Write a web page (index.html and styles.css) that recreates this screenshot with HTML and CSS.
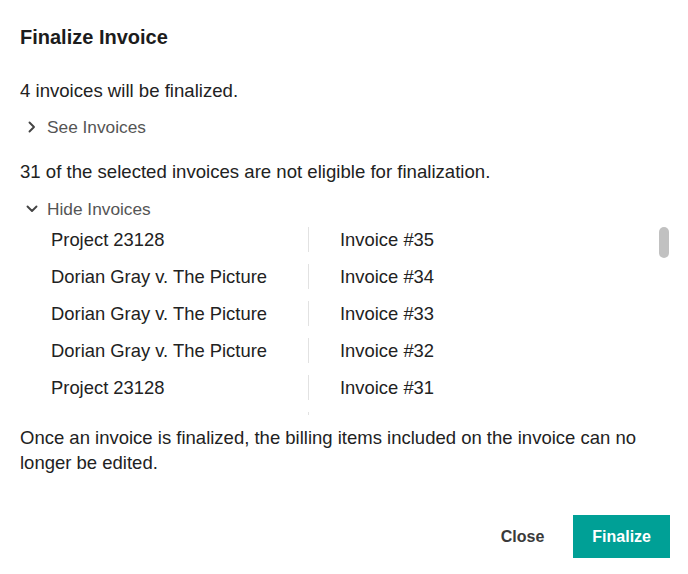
FILE: index.html
```html
<!DOCTYPE html>
<html lang="en">
<head>
    <meta charset="UTF-8">
    <meta name="viewport" content="width=device-width, initial-scale=1.0">
    <title>Finalize Invoice</title>
    <link rel="stylesheet" href="styles.css">
</head>
<body>
<div class="dialog">
    <h2 class="dialog-title">Finalize Invoice</h2>

    <p class="summary">4 invoices will be finalized.</p>
    <button class="toggle">
        <svg class="chevron" viewBox="0 0 12 12" width="12" height="12"><path d="M3.5 1.5l4.5 4.5-4.5 4.5" /></svg>
        See Invoices
    </button>

    <p class="summary summary-second">31 of the selected invoices are not eligible for finalization.</p>
    <button class="toggle toggle-open">
        <svg class="chevron" viewBox="0 0 12 12" width="12" height="12"><path d="M1.5 3.5l4.5 4.5 4.5-4.5" /></svg>
        Hide Invoices
    </button>

    <!-- Ineligible invoices (first page of 31) -->
    <div class="invoice-list">
        <div class="invoice-row"><span class="matter">Project 23128</span><span class="invoice">Invoice #35</span></div>
        <div class="invoice-row"><span class="matter">Dorian Gray v. The Picture</span><span class="invoice">Invoice #34</span></div>
        <div class="invoice-row"><span class="matter">Dorian Gray v. The Picture</span><span class="invoice">Invoice #33</span></div>
        <div class="invoice-row"><span class="matter">Dorian Gray v. The Picture</span><span class="invoice">Invoice #32</span></div>
        <div class="invoice-row"><span class="matter">Project 23128</span><span class="invoice">Invoice #31</span></div>
        <div class="invoice-row"><span class="invoice invoice-empty"></span></div>
        <div class="scroll-thumb"></div>
    </div>

    <p class="warning">Once an invoice is finalized, the billing items included on the invoice can no longer be edited.</p>

    <div class="actions">
        <button class="btn btn-close">Close</button>
        <button class="btn btn-primary">Finalize</button>
    </div>
</div>
</body>
</html>
```

FILE: styles.css
```css
* {
    margin: 0;
    padding: 0;
    box-sizing: border-box;
}

body {
    font-family: 'Liberation Sans', Arial, sans-serif;
    background-color: #fff;
    color: #222;
}

.dialog {
    width: 688px;
    height: 574px;
    padding: 23px 18px 0 20px;
}

.dialog-title {
    font-size: 20px;
    font-weight: bold;
    line-height: 28px;
    color: #1c1c1c;
}

.summary {
    font-size: 18.6px;
    line-height: 24px;
    margin-top: 28px;
}

.summary-second {
    margin-top: 21px;
}

/* Show / hide toggles */
.toggle {
    display: flex;
    align-items: center;
    gap: 9px;
    margin-top: 12px;
    padding-left: 6px;
    background: none;
    border: none;
    font-family: inherit;
    font-size: 17.3px;
    line-height: 24px;
    color: #555;
    cursor: pointer;
}

.toggle-open {
    margin-top: 13px;
}

.chevron {
    fill: none;
    stroke: #444;
    stroke-width: 1.9;
    stroke-linecap: round;
    stroke-linejoin: round;
}

/* Scrolling list */
.invoice-list {
    position: relative;
    margin-top: 6px;
    height: 188px;
    overflow: hidden;
    padding-left: 31px;
}

.scroll-thumb {
    position: absolute;
    top: 0;
    right: 1px;
    width: 10px;
    height: 31px;
    background-color: #c1c1c1;
    border-radius: 5px;
}

.invoice-row {
    display: grid;
    grid-template-columns: 257px 1fr;
    height: 25px;
    margin-bottom: 12px;
    font-size: 18.4px;
    line-height: 25px;
}

.invoice {
    border-left: 1px solid #e2e2e2;
    padding-left: 31px;
}

.invoice-empty {
    grid-column: 2;
    height: 25px;
}

.warning {
    margin-top: 10px;
    font-size: 18.5px;
    line-height: 25px;
}

/* Footer buttons */
.actions {
    display: flex;
    justify-content: flex-end;
    gap: 10px;
    margin-top: 40px;
}

.btn {
    height: 43px;
    padding: 0 19px;
    border: none;
    font-family: inherit;
    font-size: 16px;
    font-weight: bold;
    cursor: pointer;
}

.btn-close {
    background: none;
    color: #3a3a3a;
}

.btn-primary {
    background-color: #00a096;
    color: #fff;
}
```
